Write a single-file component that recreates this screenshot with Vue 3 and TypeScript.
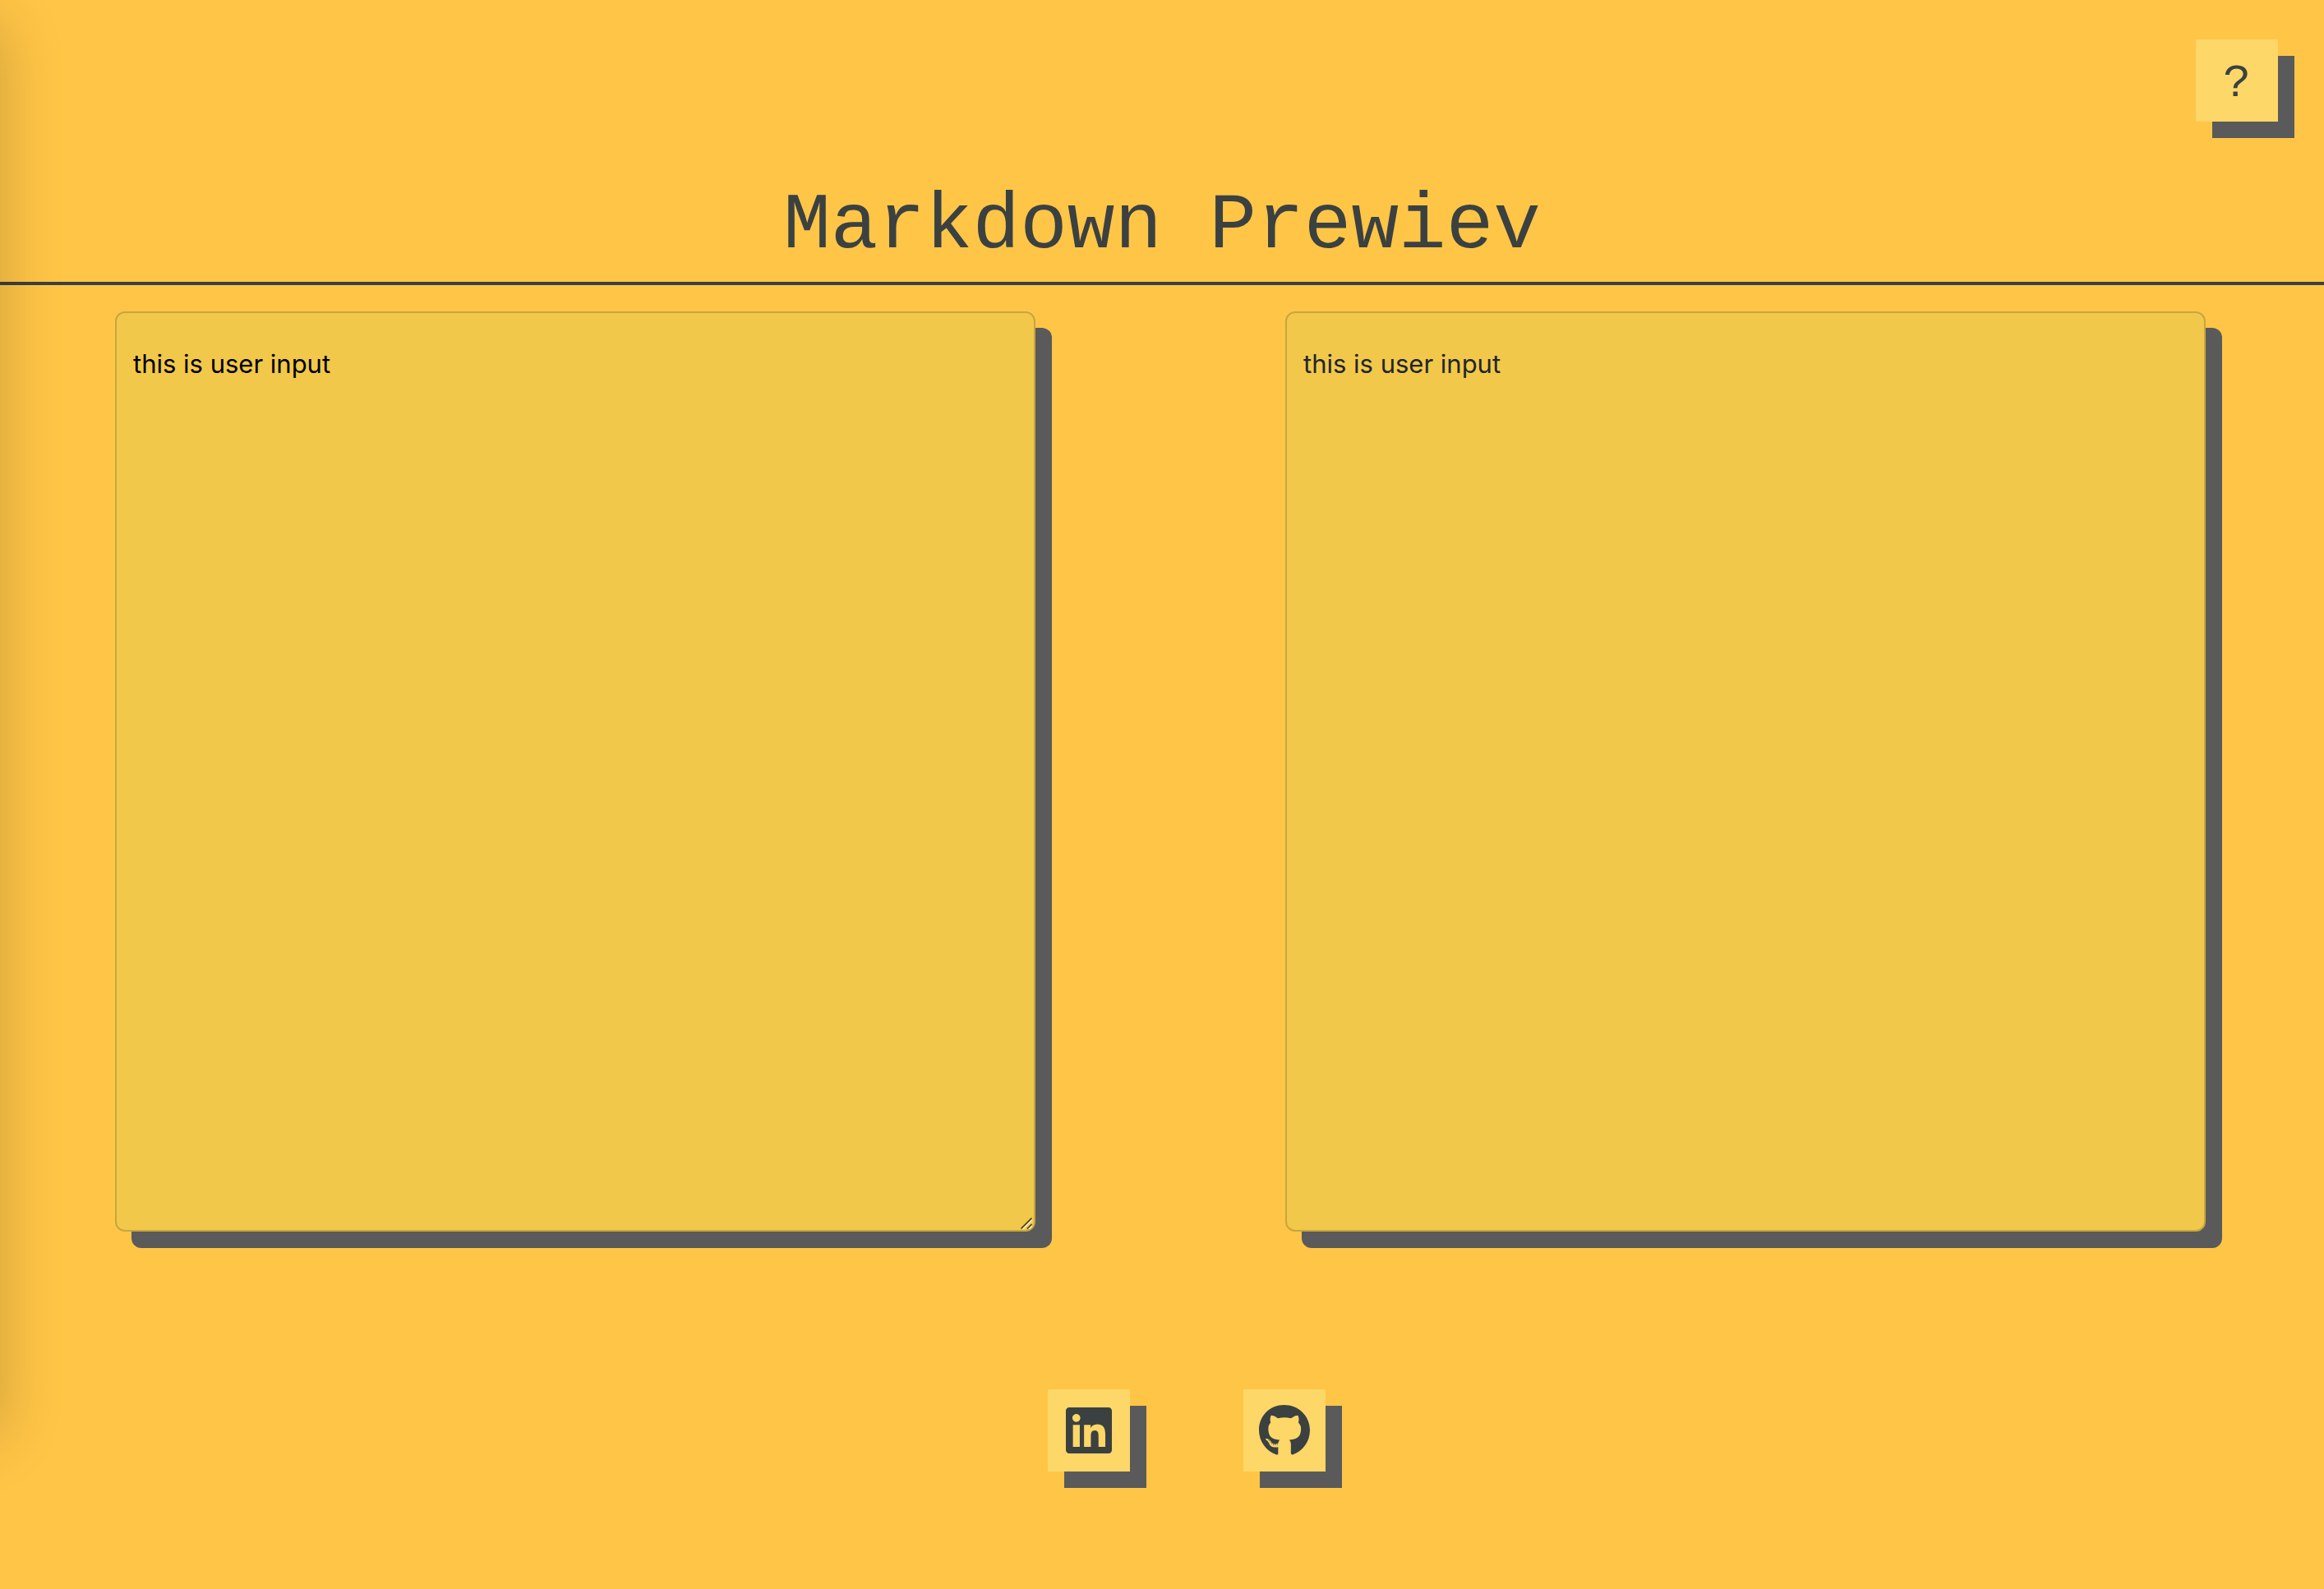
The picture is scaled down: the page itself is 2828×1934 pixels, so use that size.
<script setup lang="ts">
import { ref } from 'vue'

interface SocialLink {
  label: string
  href: string
  viewBox: string
  width: number
  path: string
}

const text = ref<string>('this is user input')

const links: SocialLink[] = [
  {
    label: 'LinkedIn',
    href: '#linkedin',
    viewBox: '0 0 448 512',
    width: 56,
    path: 'M416 32H31.9C14.3 32 0 46.5 0 64.3v383.4C0 465.5 14.3 480 31.9 480H416c17.6 0 32-14.5 32-32.3V64.3c0-17.8-14.4-32.3-32-32.3zM135.4 416H69V202.2h66.5V416zm-33.2-243c-21.3 0-38.5-17.3-38.5-38.5S80.9 96 102.2 96c21.2 0 38.5 17.3 38.5 38.5 0 21.3-17.2 38.5-38.5 38.5zm282.1 243h-66.4V312c0-24.8-.5-56.7-34.5-56.7-34.6 0-39.9 27-39.9 54.9V416h-66.4V202.2h63.7v29.2h.9c8.9-16.8 30.6-34.5 62.9-34.5 67.2 0 79.7 44.3 79.7 101.9V416z',
  },
  {
    label: 'GitHub',
    href: '#github',
    viewBox: '0 0 496 512',
    width: 62,
    path: 'M165.9 397.4c0 2-2.3 3.6-5.2 3.6-3.3.3-5.6-1.3-5.6-3.6 0-2 2.3-3.6 5.2-3.6 3-.3 5.6 1.3 5.6 3.6zm-31.1-4.5c-.7 2 1.3 4.3 4.3 4.9 2.6 1 5.6 0 6.2-2s-1.3-4.3-4.3-5.2c-2.6-.7-5.5.3-6.2 2.3zm44.2-1.7c-2.9.7-4.9 2.6-4.6 4.9.3 2 2.9 3.3 5.9 2.6 2.9-.7 4.9-2.6 4.6-4.6-.3-1.9-3-3.2-5.9-2.9zM244.8 8C106.1 8 0 113.3 0 252c0 110.9 69.8 205.8 169.5 239.2 12.8 2.3 17.3-5.6 17.3-12.1 0-6.2-.3-40.4-.3-61.4 0 0-70 15-84.7-29.8 0 0-11.4-29.1-27.8-36.6 0 0-22.9-15.7 1.6-15.4 0 0 24.9 2 38.6 25.8 21.9 38.6 58.6 27.5 72.9 20.9 2.3-16 8.8-27.1 16-33.7-55.9-6.2-112.3-14.3-112.3-110.5 0-27.5 7.6-41.3 23.6-58.9-2.6-6.5-11.1-33.3 2.6-67.9 20.9-6.5 69 27 69 27 20-5.6 41.5-8.5 62.8-8.5s42.8 2.9 62.8 8.5c0 0 48.1-33.6 69-27 13.7 34.7 5.2 61.4 2.6 67.9 16 17.7 25.8 31.5 25.8 58.9 0 96.5-58.9 104.2-114.8 110.5 9.2 7.9 17 22.9 17 46.4 0 33.7-.3 75.4-.3 83.6 0 6.5 4.6 14.4 17.3 12.1C428.2 457.8 496 362.9 496 252 496 113.3 383.5 8 244.8 8zM97.2 352.9c-1.3 1-1 3.3.7 5.2 1.6 1.6 3.9 2.3 5.2 1 1.3-1 1-3.3-.7-5.2-1.6-1.6-3.9-2.3-5.2-1zm-10.8-8.1c-.7 1.3.3 2.9 2.3 3.9 1.6 1 3.6.7 4.3-.7.7-1.3-.3-2.9-2.3-3.9-2-.6-3.6-.3-4.3.7zm32.4 35.6c-1.6 1.3-1 4.3 1.3 6.2 2.3 2.3 5.2 2.6 6.5 1 1.3-1.3.7-4.3-1.3-6.2-2.2-2.3-5.2-2.6-6.5-1zm-11.4-14.7c-1.6 1-1.6 3.6 0 5.9 1.6 2.3 4.3 3.3 5.6 2.3 1.6-1.3 1.6-3.9 0-6.2-1.4-2.3-4-3.3-5.6-2z',
  },
]
</script>

<template>
  <div class="page">
    <aside class="drawer" aria-hidden="true"></aside>

    <div class="toolbar">
      <button class="tile help" type="button" aria-label="Help">?</button>
    </div>

    <header class="header">
      <h1 class="title">Markdown Prewiev</h1>
    </header>

    <main class="panels">
      <div class="field">
        <textarea v-model="text" class="panel editor" aria-label="Markdown" spellcheck="false"></textarea>
        <svg class="grip" viewBox="0 0 14 14" width="14" height="14" fill="none" stroke-width="1.6" aria-hidden="true">
          <path d="M2.5 14L14 2.5M10 14l4-4" stroke="#fdf3d2" />
          <path d="M.5 13.5l13-13M8 13.5L13.5 8" stroke="#4d4118" />
        </svg>
      </div>
      <section class="panel preview" aria-label="Preview">{{ text }}</section>
    </main>

    <footer class="footer">
      <a v-for="link in links" :key="link.label" class="tile" :href="link.href" :aria-label="link.label">
        <svg :viewBox="link.viewBox" :width="link.width" height="64" aria-hidden="true">
          <path :d="link.path" fill="currentColor" />
        </svg>
      </a>
    </footer>
  </div>
</template>

<style>
body {
  margin: 0;
  background: #ffc547;
}
</style>

<style scoped>
.page {
  position: relative;
  box-sizing: border-box;
  min-height: 100vh;
  overflow: hidden;
  background: #ffc547;
  color: #212529;
  font-family: Inter, Roboto, "Liberation Sans", sans-serif;
}

/* Closed drawer: only its shadow reaches into the page. */
.drawer {
  position: absolute;
  top: 0;
  right: 100%;
  bottom: 214px;
  width: 800px;
  box-shadow: 0 28px 72px rgba(0, 0, 0, 0.2);
}

.toolbar {
  display: flex;
  justify-content: flex-end;
  padding: 48px 56px 0;
}

.tile {
  display: flex;
  align-items: center;
  justify-content: center;
  box-sizing: border-box;
  width: 100px;
  height: 100px;
  padding: 0;
  border: 0;
  background: #fdd767;
  box-shadow: 20px 20px 0 #5a5a5a;
  color: #3b4140;
  text-decoration: none;
  cursor: pointer;
}

.help {
  padding-top: 8px;
  font-family: "Courier New", "Liberation Mono", monospace;
  font-size: 56px;
  line-height: 72px;
}

.header {
  padding: 72px 0 11px;
  border-bottom: 4px solid #3b4140;
}

.title {
  margin: 0;
  color: #3b4140;
  font-family: "Courier New", "Liberation Mono", monospace;
  font-size: 96px;
  font-weight: 400;
  line-height: 112px;
  text-align: center;
}

.panels {
  display: grid;
  grid-template-columns: 1fr 1fr;
  gap: 304px;
  padding: 32px 144px 0 140px;
}

.field {
  position: relative;
}

.panel {
  display: block;
  box-sizing: border-box;
  width: 100%;
  aspect-ratio: 1;
  margin: 0;
  padding: 38px 20px;
  border: 2px solid #c8a63f;
  border-radius: 12px;
  background: #f2c84b;
  box-shadow: 20px 20px 0 #5a5a5a;
  font-family: inherit;
  font-size: 31px;
  line-height: 48px;
  white-space: pre-wrap;
}

.editor {
  outline: 0;
  color: #000;
  resize: none;
}

/* Resize handle in the editor's corner. */
.grip {
  position: absolute;
  right: 4px;
  bottom: 3px;
  pointer-events: none;
}

.footer {
  display: flex;
  justify-content: center;
  gap: 138px;
  padding: 192px 0 32px 60px;
}
</style>
